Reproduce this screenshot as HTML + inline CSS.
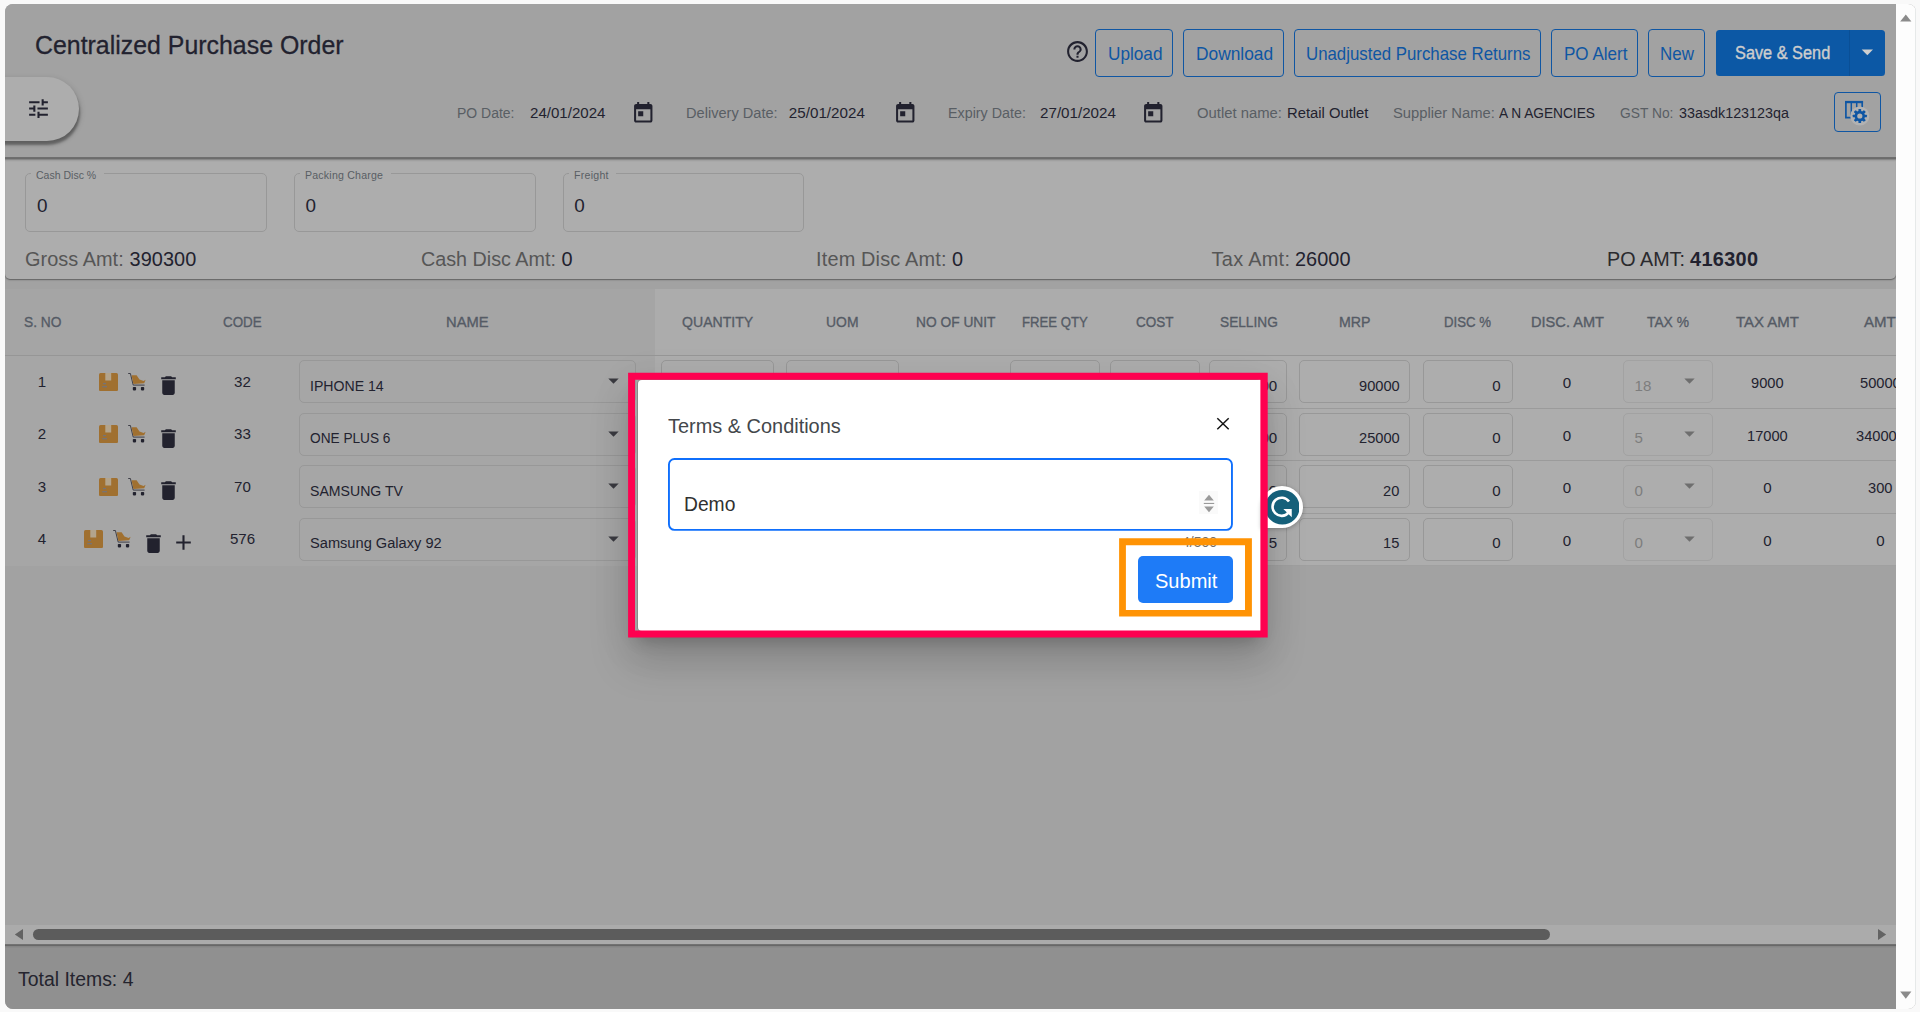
<!DOCTYPE html>
<html lang="en"><head><meta charset="utf-8"><title>Centralized Purchase Order</title>
<style>
html,body{margin:0;padding:0;}
body{width:1920px;height:1012px;overflow:hidden;background:#f9f9f9;font-family:"Liberation Sans",sans-serif;position:relative;}
.a{position:absolute;box-sizing:border-box;}
.t{position:absolute;white-space:nowrap;margin:0;padding:0;font-weight:400;}
.g{position:static;display:block;margin:0;padding:0;border:0;}
#clip{position:absolute;left:0;top:0;width:1920px;height:1012px;overflow:hidden;clip-path:inset(4px 4px 3px 5px round 8px);}
</style></head><body>
<div id="clip">
<div class="g backdrop">
<div class="a" style="left:0px;top:0px;width:1920.00px;height:1012.00px;background:#a2a2a2;"></div>
<div class="a" style="left:5px;top:4px;width:1891.00px;height:154.00px;background:#a2a2a2;"></div>
<div class="a" style="left:5px;top:158px;width:1891.00px;height:121.00px;background:#adadad;border-radius:0 0 5px 5px;box-shadow:0 1px 1.5px rgba(0,0,0,.42), inset 0 2px 2px -1px rgba(0,0,0,.32);"></div>
<div class="a" style="left:5px;top:157px;width:1891.00px;height:5.00px;background:linear-gradient(#6f6f6f 0,#6f6f6f 20%,#6c6c6c 20%,#6c6c6c 40%,#878787 40%,#878787 60%,#a0a0a0 60%,#a0a0a0 80%,#a9a9a9 80%);"></div>
</div>
<header class="g page-header">
<h1 class="t" style="left:35.40px;top:32px;font-size:26.6px;line-height:26.6px;transform:scaleX(0.9360);transform-origin:0 0;color:#22222f;-webkit-text-stroke:0.3px #22222f;">Centralized Purchase Order</h1>
<div class="g filter-toggle" role="button" aria-label="Filters">
<div class="a" style="left:-40px;top:77px;width:119.00px;height:64.00px;background:#adadad;border-radius:0 32px 32px 0;box-shadow:1px 4px 2.5px rgba(0,0,0,.34), 1px 2px 6px rgba(0,0,0,.16);"></div>
<svg class="a" style="left:26.2px;top:96px" width="25" height="25" viewBox="0 0 24 24"><path fill="#22222f" d="M3 17v2h6v-2H3zM3 5v2h10V5H3zm10 16v-2h8v-2h-8v-2h-2v6h2zM7 9v2H3v2h4v2h2V9H7zm14 4v-2H11v2h10zm-6-4h2V7h4V5h-4V3h-2v6z"/></svg>
</div>
<nav class="g toolbar">
<svg class="a" style="left:1065.0px;top:38.8px" width="25" height="25" viewBox="0 0 24 24"><path fill="#22222f" d="M11 18h2v-2h-2v2zm1-16C6.48 2 2 6.48 2 12s4.48 10 10 10 10-4.48 10-10S17.52 2 12 2zm0 18c-4.41 0-8-3.59-8-8s3.59-8 8-8 8 3.59 8 8-3.59 8-8 8zm0-14c-2.21 0-4 1.79-4 4h2c0-1.1.9-2 2-2s2 .9 2 2c0 2-3 1.75-3 5h2c0-2.25 3-2.5 3-5 0-2.21-1.79-4-4-4z"/></svg>
<div class="g btn-outline" role="button">
<div class="a" style="left:1095px;top:29px;width:77.50px;height:48.00px;border:1.3px solid #0f56a3;border-radius:4px;"></div>
<span class="t" style="left:1107.50px;top:45px;font-size:18.4px;line-height:18.4px;transform:scaleX(0.9347);transform-origin:0 0;color:#0f56a3;">Upload</span>
</div>
<div class="g btn-outline" role="button">
<div class="a" style="left:1183px;top:29px;width:101.00px;height:48.00px;border:1.3px solid #0f56a3;border-radius:4px;"></div>
<span class="t" style="left:1195.70px;top:45px;font-size:18.4px;line-height:18.4px;transform:scaleX(0.9434);transform-origin:0 0;color:#0f56a3;">Download</span>
</div>
<div class="g btn-outline" role="button">
<div class="a" style="left:1294px;top:29px;width:246.50px;height:48.00px;border:1.3px solid #0f56a3;border-radius:4px;"></div>
<span class="t" style="left:1306.00px;top:45px;font-size:18.4px;line-height:18.4px;transform:scaleX(0.9146);transform-origin:0 0;color:#0f56a3;">Unadjusted Purchase Returns</span>
</div>
<div class="g btn-outline" role="button">
<div class="a" style="left:1551px;top:29px;width:86.50px;height:48.00px;border:1.3px solid #0f56a3;border-radius:4px;"></div>
<span class="t" style="left:1563.50px;top:45px;font-size:18.4px;line-height:18.4px;transform:scaleX(0.9268);transform-origin:0 0;color:#0f56a3;">PO Alert</span>
</div>
<div class="g btn-outline" role="button">
<div class="a" style="left:1648px;top:29px;width:56.50px;height:48.00px;border:1.3px solid #0f56a3;border-radius:4px;"></div>
<span class="t" style="left:1660.00px;top:45px;font-size:18.4px;line-height:18.4px;transform:scaleX(0.9223);transform-origin:0 0;color:#0f56a3;">New</span>
</div>
<div class="g btn-primary split" role="button">
<div class="a" style="left:1716px;top:30px;width:169.00px;height:46.00px;background:#0c58a5;border-radius:3.5px;"></div>
<div class="a" style="left:1848.5px;top:30px;width:1.00px;height:46.00px;background:#0a4f96;"></div>
<div class="t" style="left:1734.80px;top:44px;font-size:18.3px;line-height:18.3px;transform:scaleX(0.8921);transform-origin:0 0;color:#cdcdcd;-webkit-text-stroke:0.4px #cdcdcd;">Save &amp; Send</div>
<svg class="a" style="left:1861px;top:48.6px" width="13" height="7" viewBox="0 0 13 7"><path d="M0.7 0.5 L12 0.5 L6.35 6.3 Z" fill="#cfcfcf"/></svg>
</div>
</nav>
<div class="g order-info">
<div class="t" style="left:457.00px;top:105px;font-size:15.2px;line-height:15.2px;transform:scaleX(0.9197);transform-origin:0 0;color:#595e64;">PO Date:</div>
<div class="t" style="left:529.50px;top:105px;font-size:15.2px;line-height:15.2px;transform:scaleX(0.9924);transform-origin:0 0;color:#22222f;">24/01/2024</div>
<svg class="a" style="left:630.7px;top:100.9px" width="24.5" height="24.5" viewBox="0 0 24 24"><path fill="#22222f" d="M19 3h-1V1h-2v2H8V1H6v2H5c-1.11 0-1.99.9-1.99 2L3 19c0 1.1.89 2 2 2h14c1.1 0 2-.9 2-2V5c0-1.1-.9-2-2-2zm0 16H5V8h14v11zM7 10h5v5H7z"/></svg>
<div class="t" style="left:685.75px;top:105px;font-size:15.2px;line-height:15.2px;transform:scaleX(0.9612);transform-origin:0 0;color:#595e64;">Delivery Date:</div>
<div class="t" style="left:788.75px;top:105px;font-size:15.2px;line-height:15.2px;letter-spacing:0.019px;color:#22222f;">25/01/2024</div>
<svg class="a" style="left:892.7px;top:100.9px" width="24.5" height="24.5" viewBox="0 0 24 24"><path fill="#22222f" d="M19 3h-1V1h-2v2H8V1H6v2H5c-1.11 0-1.99.9-1.99 2L3 19c0 1.1.89 2 2 2h14c1.1 0 2-.9 2-2V5c0-1.1-.9-2-2-2zm0 16H5V8h14v11zM7 10h5v5H7z"/></svg>
<div class="t" style="left:948.00px;top:105px;font-size:15.2px;line-height:15.2px;transform:scaleX(0.9422);transform-origin:0 0;color:#595e64;">Expiry Date:</div>
<div class="t" style="left:1040.00px;top:105px;font-size:15.2px;line-height:15.2px;transform:scaleX(0.9990);transform-origin:0 0;color:#22222f;">27/01/2024</div>
<svg class="a" style="left:1141.2px;top:100.9px" width="24.5" height="24.5" viewBox="0 0 24 24"><path fill="#22222f" d="M19 3h-1V1h-2v2H8V1H6v2H5c-1.11 0-1.99.9-1.99 2L3 19c0 1.1.89 2 2 2h14c1.1 0 2-.9 2-2V5c0-1.1-.9-2-2-2zm0 16H5V8h14v11zM7 10h5v5H7z"/></svg>
<div class="t" style="left:1196.50px;top:105px;font-size:15.2px;line-height:15.2px;transform:scaleX(0.9768);transform-origin:0 0;color:#595e64;">Outlet name:</div>
<div class="t" style="left:1286.50px;top:105px;font-size:15.2px;line-height:15.2px;transform:scaleX(0.9744);transform-origin:0 0;color:#22222f;">Retail Outlet</div>
<div class="t" style="left:1393.00px;top:105px;font-size:15.2px;line-height:15.2px;transform:scaleX(0.9737);transform-origin:0 0;color:#595e64;">Supplier Name:</div>
<div class="t" style="left:1499.00px;top:105px;font-size:15.2px;line-height:15.2px;transform:scaleX(0.9019);transform-origin:0 0;color:#22222f;">A N AGENCIES</div>
<div class="t" style="left:1620.00px;top:105px;font-size:15.2px;line-height:15.2px;transform:scaleX(0.9091);transform-origin:0 0;color:#595e64;">GST No:</div>
<div class="t" style="left:1678.50px;top:105px;font-size:15.2px;line-height:15.2px;transform:scaleX(0.9430);transform-origin:0 0;color:#22222f;">33asdk123123qa</div>
<div class="a" style="left:1834px;top:92px;width:47.00px;height:40.00px;border:1.3px solid #0f56a3;border-radius:4px;"></div>
<svg class="a" style="left:1843px;top:98px" width="28" height="28" viewBox="0 0 28 28">
<path d="M2.9 4 H19.2 V19.6 H2.9 Z" fill="none" stroke="#0f56a3" stroke-width="1.7"/>
<path d="M8.3 4 V19.6 M13.7 4 V19.6" stroke="#0f56a3" stroke-width="1.5"/>
<rect x="2.05" y="2.9" width="18" height="2.3" fill="#0f56a3"/>
<circle cx="16.8" cy="18" r="9.6" fill="#b2b2b2"/>
<g transform="translate(16.8 18)"><circle r="3.9" fill="none" stroke="#0f56a3" stroke-width="2.6"/><rect x="-1.35" y="-7.1" width="2.7" height="3" rx="0.5" transform="rotate(0)" fill="#0f56a3"/><rect x="-1.35" y="-7.1" width="2.7" height="3" rx="0.5" transform="rotate(45)" fill="#0f56a3"/><rect x="-1.35" y="-7.1" width="2.7" height="3" rx="0.5" transform="rotate(90)" fill="#0f56a3"/><rect x="-1.35" y="-7.1" width="2.7" height="3" rx="0.5" transform="rotate(135)" fill="#0f56a3"/><rect x="-1.35" y="-7.1" width="2.7" height="3" rx="0.5" transform="rotate(180)" fill="#0f56a3"/><rect x="-1.35" y="-7.1" width="2.7" height="3" rx="0.5" transform="rotate(225)" fill="#0f56a3"/><rect x="-1.35" y="-7.1" width="2.7" height="3" rx="0.5" transform="rotate(270)" fill="#0f56a3"/><rect x="-1.35" y="-7.1" width="2.7" height="3" rx="0.5" transform="rotate(315)" fill="#0f56a3"/></g>
</svg>
</div>
</header>
<section class="g charges-panel">
<div class="g charge-fields">
<div class="a" style="left:25px;top:173px;width:241.50px;height:58.50px;border:1px solid #989898;border-radius:5px;"></div>
<div class="a" style="left:31.099999999999998px;top:172px;width:73.40px;height:3.00px;background:#adadad;"></div>
<div class="t" style="left:36.30px;top:170px;font-size:10.6px;line-height:10.6px;transform:scaleX(0.9923);transform-origin:0 0;color:#595e64;">Cash Disc %</div>
<div class="t" style="left:37.00px;top:197px;font-size:18.9px;line-height:18.9px;color:#22222f;">0</div>
<div class="a" style="left:294px;top:173px;width:242.00px;height:58.50px;border:1px solid #989898;border-radius:5px;"></div>
<div class="a" style="left:299.8px;top:172px;width:91.20px;height:3.00px;background:#adadad;"></div>
<div class="t" style="left:305.00px;top:170px;font-size:10.6px;line-height:10.6px;letter-spacing:0.198px;color:#595e64;">Packing Charge</div>
<div class="t" style="left:305.60px;top:197px;font-size:18.9px;line-height:18.9px;color:#22222f;">0</div>
<div class="a" style="left:563px;top:173px;width:240.80px;height:58.50px;border:1px solid #989898;border-radius:5px;"></div>
<div class="a" style="left:568.8px;top:172px;width:47.70px;height:3.00px;background:#adadad;"></div>
<div class="t" style="left:574.00px;top:170px;font-size:10.6px;line-height:10.6px;letter-spacing:0.251px;color:#595e64;">Freight</div>
<div class="t" style="left:574.30px;top:197px;font-size:18.9px;line-height:18.9px;color:#22222f;">0</div>
</div>
<div class="g totals">
<div class="t" style="left:25.00px;top:250px;font-size:19.9px;line-height:19.9px;letter-spacing:0.037px;color:#565656;">Gross Amt:</div>
<div class="t" style="left:129.50px;top:250px;font-size:19.9px;line-height:19.9px;letter-spacing:0.069px;color:#22222f;">390300</div>
<div class="t" style="left:421.00px;top:250px;font-size:19.9px;line-height:19.9px;transform:scaleX(0.9925);transform-origin:0 0;color:#565656;">Cash Disc Amt:</div>
<div class="t" style="left:561.50px;top:250px;font-size:19.9px;line-height:19.9px;color:#22222f;">0</div>
<div class="t" style="left:816.00px;top:250px;font-size:19.9px;line-height:19.9px;letter-spacing:0.172px;color:#565656;">Item Disc Amt:</div>
<div class="t" style="left:952.00px;top:250px;font-size:19.9px;line-height:19.9px;color:#22222f;">0</div>
<div class="t" style="left:1211.50px;top:250px;font-size:19.9px;line-height:19.9px;letter-spacing:0.313px;color:#565656;">Tax Amt:</div>
<div class="t" style="left:1295.00px;top:250px;font-size:19.9px;line-height:19.9px;letter-spacing:0.040px;color:#22222f;">26000</div>
<div class="t" style="left:1607.00px;top:250px;font-size:19.9px;line-height:19.9px;transform:scaleX(0.9934);transform-origin:0 0;color:#2a2a2e;">PO AMT:</div>
<div class="t" style="left:1690.00px;top:250px;font-size:19.9px;line-height:19.9px;letter-spacing:0.319px;color:#22222f;font-weight:700;">416300</div>
</div>
</section>
<section class="g items-grid">
<div class="a" style="left:5px;top:289px;width:650.00px;height:276.50px;background:#a6a6a6;"></div>
<div class="a" style="left:655px;top:289px;width:1241.00px;height:276.50px;background:#adadad;"></div>
<div class="a" style="left:5px;top:289px;width:650.00px;height:66.50px;background:#a5a5a5;"></div>
<div class="a" style="left:655px;top:289px;width:1241.00px;height:66.50px;background:#acacac;"></div>
<div class="a" style="left:5px;top:355px;width:1891.00px;height:1.00px;background:#969696;"></div>
<div class="a" style="left:655px;top:407.79999999999995px;width:1241.00px;height:1.00px;background:#9b9b9b;"></div>
<div class="a" style="left:655px;top:460.29999999999995px;width:1241.00px;height:1.00px;background:#9b9b9b;"></div>
<div class="a" style="left:655px;top:512.8px;width:1241.00px;height:1.00px;background:#9b9b9b;"></div>
<div class="a" style="left:655px;top:565px;width:1241.00px;height:1.00px;background:#a0a0a0;"></div>
<div class="g grid-head" role="row">
<div class="t" style="left:23.75px;top:314px;font-size:15.5px;line-height:15.5px;transform:scaleX(0.8887);transform-origin:0 0;color:#555b65;-webkit-text-stroke:0.35px #555b65;">S. NO</div>
<div class="t" style="left:223.25px;top:314px;font-size:15.5px;line-height:15.5px;transform:scaleX(0.8654);transform-origin:0 0;color:#555b65;-webkit-text-stroke:0.35px #555b65;">CODE</div>
<div class="t" style="left:446.20px;top:314px;font-size:15.5px;line-height:15.5px;transform:scaleX(0.9513);transform-origin:0 0;color:#555b65;-webkit-text-stroke:0.35px #555b65;">NAME</div>
<div class="t" style="left:681.75px;top:314px;font-size:15.5px;line-height:15.5px;transform:scaleX(0.9093);transform-origin:0 0;color:#555b65;-webkit-text-stroke:0.35px #555b65;">QUANTITY</div>
<div class="t" style="left:826.25px;top:314px;font-size:15.5px;line-height:15.5px;transform:scaleX(0.8987);transform-origin:0 0;color:#555b65;-webkit-text-stroke:0.35px #555b65;">UOM</div>
<div class="t" style="left:915.50px;top:314px;font-size:15.5px;line-height:15.5px;transform:scaleX(0.8878);transform-origin:0 0;color:#555b65;-webkit-text-stroke:0.35px #555b65;">NO OF UNIT</div>
<div class="t" style="left:1022.00px;top:314px;font-size:15.5px;line-height:15.5px;transform:scaleX(0.8489);transform-origin:0 0;color:#555b65;-webkit-text-stroke:0.35px #555b65;">FREE QTY</div>
<div class="t" style="left:1136.30px;top:314px;font-size:15.5px;line-height:15.5px;transform:scaleX(0.8709);transform-origin:0 0;color:#555b65;-webkit-text-stroke:0.35px #555b65;">COST</div>
<div class="t" style="left:1219.70px;top:314px;font-size:15.5px;line-height:15.5px;transform:scaleX(0.8828);transform-origin:0 0;color:#555b65;-webkit-text-stroke:0.35px #555b65;">SELLING</div>
<div class="t" style="left:1339.40px;top:314px;font-size:15.5px;line-height:15.5px;transform:scaleX(0.9146);transform-origin:0 0;color:#555b65;-webkit-text-stroke:0.35px #555b65;">MRP</div>
<div class="t" style="left:1444.20px;top:314px;font-size:15.5px;line-height:15.5px;transform:scaleX(0.8527);transform-origin:0 0;color:#555b65;-webkit-text-stroke:0.35px #555b65;">DISC %</div>
<div class="t" style="left:1531.00px;top:314px;font-size:15.5px;line-height:15.5px;transform:scaleX(0.9418);transform-origin:0 0;color:#555b65;-webkit-text-stroke:0.35px #555b65;">DISC. AMT</div>
<div class="t" style="left:1646.70px;top:314px;font-size:15.5px;line-height:15.5px;transform:scaleX(0.8900);transform-origin:0 0;color:#555b65;-webkit-text-stroke:0.35px #555b65;">TAX %</div>
<div class="t" style="left:1736.00px;top:314px;font-size:15.5px;line-height:15.5px;transform:scaleX(0.9653);transform-origin:0 0;color:#555b65;-webkit-text-stroke:0.35px #555b65;">TAX AMT</div>
<div class="t" style="left:1864.20px;top:314px;font-size:15.5px;line-height:15.5px;transform:scaleX(0.9719);transform-origin:0 0;color:#555b65;-webkit-text-stroke:0.35px #555b65;">AMT</div>
</div>
<div class="g grid-row" role="row">
<div class="t" style="left:37.80px;top:374px;font-size:15.1px;line-height:15.1px;color:#22222f;">1</div>
<div class="t" style="left:234.10px;top:374px;font-size:15.1px;line-height:15.1px;transform:scaleX(1.0000);transform-origin:0 0;color:#22222f;">32</div>
<svg class="a" style="left:99.1px;top:372.7px" width="19" height="18.2" viewBox="0 0 19 18.2">
<rect x="0" y="0" width="19" height="18.2" rx="1.6" fill="#a07030"/>
<rect x="6.3" y="0" width="5.9" height="7.5" fill="#b3a48c"/>
<rect x="4" y="10.1" width="3" height="1.1" fill="#6f7482"/><rect x="3.2" y="13.2" width="4.8" height="1.1" fill="#6f7482"/>
</svg>
<svg class="a" style="left:128.1px;top:372.9px" width="18" height="18" viewBox="0 0 18 18">
<path d="M0.2 0.5 H2.4 L5.2 12.1 H16.6" fill="none" stroke="#33333d" stroke-width="0.9"/>
<path d="M3.6 2.3 H8.6 L11.5 6.6 L15.6 7.9 L17.6 6.7 L16.2 10.2 L5.4 11 Z" fill="#a07030"/>
<rect x="4.8" y="13.9" width="3.3" height="3.5" rx="0.8" fill="#22222e"/><rect x="12.9" y="13.9" width="3.3" height="3.5" rx="0.8" fill="#22222e"/>
</svg>
<svg class="a" style="left:156px;top:373.2px" width="25" height="25" viewBox="0 0 24 24"><path fill="#22222e" d="M6 19c0 1.1.9 2 2 2h8c1.1 0 2-.9 2-2V7H6v12zM19 4h-3.5l-1-1h-5l-1 1H5v2h14V4z"/></svg>
<div class="a" style="left:299.3px;top:360.29999999999995px;width:336.70px;height:43.10px;border:1px solid #989898;border-radius:5px;"></div>
<div class="t" style="left:310.00px;top:378px;font-size:15.1px;line-height:15.1px;transform:scaleX(0.9349);transform-origin:0 0;color:#22222f;">IPHONE 14</div>
<svg class="a" style="left:601.4px;top:368.29999999999995px" width="25" height="25" viewBox="0 0 24 24"><path fill="#3a3a40" d="M7 10l5 5 5-5z"/></svg>
<div class="a" style="left:661.25px;top:360.29999999999995px;width:112.50px;height:43.10px;border:1px solid #989898;border-radius:5px;"></div>
<div class="a" style="left:786.25px;top:360.29999999999995px;width:112.50px;height:43.10px;border:1px solid #989898;border-radius:5px;"></div>
<div class="a" style="left:1010.3px;top:360.29999999999995px;width:89.40px;height:43.10px;border:1px solid #989898;border-radius:5px;"></div>
<div class="a" style="left:1110px;top:360.29999999999995px;width:89.70px;height:43.10px;border:1px solid #989898;border-radius:5px;"></div>
<div class="a" style="left:1209.2px;top:360.29999999999995px;width:78.30px;height:43.10px;border:1px solid #989898;border-radius:5px;"></div>
<div class="a" style="left:1299.3px;top:360.29999999999995px;width:111.10px;height:43.10px;border:1px solid #989898;border-radius:5px;"></div>
<div class="a" style="left:1423.3px;top:360.29999999999995px;width:89.40px;height:43.10px;border:1px solid #989898;border-radius:5px;"></div>
<div class="t" style="left:1260.40px;top:378px;font-size:15.1px;line-height:15.1px;transform:scaleX(1.0000);transform-origin:0 0;color:#22222f;">00</div>
<div class="t" style="left:1358.77px;top:378px;font-size:15.1px;line-height:15.1px;transform:scaleX(0.9700);transform-origin:0 0;color:#22222f;">90000</div>
<div class="t" style="left:1492.30px;top:378px;font-size:15.1px;line-height:15.1px;color:#22222f;">0</div>
<div class="t" style="left:1562.80px;top:375px;font-size:15.1px;line-height:15.1px;color:#22222f;">0</div>
<div class="a" style="left:1623px;top:360.29999999999995px;width:89.70px;height:43.10px;border:1px solid #a2a2a2;border-radius:5px;"></div>
<div class="t" style="left:1634.50px;top:378px;font-size:15.1px;line-height:15.1px;transform:scaleX(1.0000);transform-origin:0 0;color:#7d7d7d;">18</div>
<svg class="a" style="left:1677px;top:368.29999999999995px" width="25" height="25" viewBox="0 0 24 24"><path fill="#6e6e6e" d="M7 10l5 5 5-5z"/></svg>
<div class="t" style="left:1750.91px;top:375px;font-size:15.1px;line-height:15.1px;transform:scaleX(0.9700);transform-origin:0 0;color:#22222f;">9000</div>
<div class="t" style="left:1859.93px;top:375px;font-size:15.1px;line-height:15.1px;transform:scaleX(0.9700);transform-origin:0 0;color:#22222f;">50000</div>
</div>
<div class="g grid-row" role="row">
<div class="t" style="left:37.80px;top:426px;font-size:15.1px;line-height:15.1px;color:#22222f;">2</div>
<div class="t" style="left:234.10px;top:426px;font-size:15.1px;line-height:15.1px;transform:scaleX(1.0000);transform-origin:0 0;color:#22222f;">33</div>
<svg class="a" style="left:99.1px;top:425.2px" width="19" height="18.2" viewBox="0 0 19 18.2">
<rect x="0" y="0" width="19" height="18.2" rx="1.6" fill="#a07030"/>
<rect x="6.3" y="0" width="5.9" height="7.5" fill="#b3a48c"/>
<rect x="4" y="10.1" width="3" height="1.1" fill="#6f7482"/><rect x="3.2" y="13.2" width="4.8" height="1.1" fill="#6f7482"/>
</svg>
<svg class="a" style="left:128.1px;top:425.4px" width="18" height="18" viewBox="0 0 18 18">
<path d="M0.2 0.5 H2.4 L5.2 12.1 H16.6" fill="none" stroke="#33333d" stroke-width="0.9"/>
<path d="M3.6 2.3 H8.6 L11.5 6.6 L15.6 7.9 L17.6 6.7 L16.2 10.2 L5.4 11 Z" fill="#a07030"/>
<rect x="4.8" y="13.9" width="3.3" height="3.5" rx="0.8" fill="#22222e"/><rect x="12.9" y="13.9" width="3.3" height="3.5" rx="0.8" fill="#22222e"/>
</svg>
<svg class="a" style="left:156px;top:425.7px" width="25" height="25" viewBox="0 0 24 24"><path fill="#22222e" d="M6 19c0 1.1.9 2 2 2h8c1.1 0 2-.9 2-2V7H6v12zM19 4h-3.5l-1-1h-5l-1 1H5v2h14V4z"/></svg>
<div class="a" style="left:299.3px;top:412.79999999999995px;width:336.70px;height:43.10px;border:1px solid #989898;border-radius:5px;"></div>
<div class="t" style="left:310.00px;top:430px;font-size:15.1px;line-height:15.1px;transform:scaleX(0.9050);transform-origin:0 0;color:#22222f;">ONE PLUS 6</div>
<svg class="a" style="left:601.4px;top:420.79999999999995px" width="25" height="25" viewBox="0 0 24 24"><path fill="#3a3a40" d="M7 10l5 5 5-5z"/></svg>
<div class="a" style="left:661.25px;top:412.79999999999995px;width:112.50px;height:43.10px;border:1px solid #989898;border-radius:5px;"></div>
<div class="a" style="left:786.25px;top:412.79999999999995px;width:112.50px;height:43.10px;border:1px solid #989898;border-radius:5px;"></div>
<div class="a" style="left:1010.3px;top:412.79999999999995px;width:89.40px;height:43.10px;border:1px solid #989898;border-radius:5px;"></div>
<div class="a" style="left:1110px;top:412.79999999999995px;width:89.70px;height:43.10px;border:1px solid #989898;border-radius:5px;"></div>
<div class="a" style="left:1209.2px;top:412.79999999999995px;width:78.30px;height:43.10px;border:1px solid #989898;border-radius:5px;"></div>
<div class="a" style="left:1299.3px;top:412.79999999999995px;width:111.10px;height:43.10px;border:1px solid #989898;border-radius:5px;"></div>
<div class="a" style="left:1423.3px;top:412.79999999999995px;width:89.40px;height:43.10px;border:1px solid #989898;border-radius:5px;"></div>
<div class="t" style="left:1260.40px;top:430px;font-size:15.1px;line-height:15.1px;transform:scaleX(1.0000);transform-origin:0 0;color:#22222f;">00</div>
<div class="t" style="left:1358.77px;top:430px;font-size:15.1px;line-height:15.1px;transform:scaleX(0.9700);transform-origin:0 0;color:#22222f;">25000</div>
<div class="t" style="left:1492.30px;top:430px;font-size:15.1px;line-height:15.1px;color:#22222f;">0</div>
<div class="t" style="left:1562.80px;top:428px;font-size:15.1px;line-height:15.1px;color:#22222f;">0</div>
<div class="a" style="left:1623px;top:412.79999999999995px;width:89.70px;height:43.10px;border:1px solid #a2a2a2;border-radius:5px;"></div>
<div class="t" style="left:1634.50px;top:430px;font-size:15.1px;line-height:15.1px;color:#7d7d7d;">5</div>
<svg class="a" style="left:1677px;top:420.79999999999995px" width="25" height="25" viewBox="0 0 24 24"><path fill="#6e6e6e" d="M7 10l5 5 5-5z"/></svg>
<div class="t" style="left:1746.83px;top:428px;font-size:15.1px;line-height:15.1px;transform:scaleX(0.9700);transform-origin:0 0;color:#22222f;">17000</div>
<div class="t" style="left:1855.86px;top:428px;font-size:15.1px;line-height:15.1px;transform:scaleX(0.9700);transform-origin:0 0;color:#22222f;">340000</div>
</div>
<div class="g grid-row" role="row">
<div class="t" style="left:37.80px;top:479px;font-size:15.1px;line-height:15.1px;color:#22222f;">3</div>
<div class="t" style="left:234.10px;top:479px;font-size:15.1px;line-height:15.1px;transform:scaleX(1.0000);transform-origin:0 0;color:#22222f;">70</div>
<svg class="a" style="left:99.1px;top:477.7px" width="19" height="18.2" viewBox="0 0 19 18.2">
<rect x="0" y="0" width="19" height="18.2" rx="1.6" fill="#a07030"/>
<rect x="6.3" y="0" width="5.9" height="7.5" fill="#b3a48c"/>
<rect x="4" y="10.1" width="3" height="1.1" fill="#6f7482"/><rect x="3.2" y="13.2" width="4.8" height="1.1" fill="#6f7482"/>
</svg>
<svg class="a" style="left:128.1px;top:477.9px" width="18" height="18" viewBox="0 0 18 18">
<path d="M0.2 0.5 H2.4 L5.2 12.1 H16.6" fill="none" stroke="#33333d" stroke-width="0.9"/>
<path d="M3.6 2.3 H8.6 L11.5 6.6 L15.6 7.9 L17.6 6.7 L16.2 10.2 L5.4 11 Z" fill="#a07030"/>
<rect x="4.8" y="13.9" width="3.3" height="3.5" rx="0.8" fill="#22222e"/><rect x="12.9" y="13.9" width="3.3" height="3.5" rx="0.8" fill="#22222e"/>
</svg>
<svg class="a" style="left:156px;top:478.2px" width="25" height="25" viewBox="0 0 24 24"><path fill="#22222e" d="M6 19c0 1.1.9 2 2 2h8c1.1 0 2-.9 2-2V7H6v12zM19 4h-3.5l-1-1h-5l-1 1H5v2h14V4z"/></svg>
<div class="a" style="left:299.3px;top:465.29999999999995px;width:336.70px;height:43.10px;border:1px solid #989898;border-radius:5px;"></div>
<div class="t" style="left:310.00px;top:483px;font-size:15.1px;line-height:15.1px;transform:scaleX(0.9340);transform-origin:0 0;color:#22222f;">SAMSUNG TV</div>
<svg class="a" style="left:601.4px;top:473.29999999999995px" width="25" height="25" viewBox="0 0 24 24"><path fill="#3a3a40" d="M7 10l5 5 5-5z"/></svg>
<div class="a" style="left:661.25px;top:465.29999999999995px;width:112.50px;height:43.10px;border:1px solid #989898;border-radius:5px;"></div>
<div class="a" style="left:786.25px;top:465.29999999999995px;width:112.50px;height:43.10px;border:1px solid #989898;border-radius:5px;"></div>
<div class="a" style="left:1010.3px;top:465.29999999999995px;width:89.40px;height:43.10px;border:1px solid #989898;border-radius:5px;"></div>
<div class="a" style="left:1110px;top:465.29999999999995px;width:89.70px;height:43.10px;border:1px solid #989898;border-radius:5px;"></div>
<div class="a" style="left:1209.2px;top:465.29999999999995px;width:78.30px;height:43.10px;border:1px solid #989898;border-radius:5px;"></div>
<div class="a" style="left:1299.3px;top:465.29999999999995px;width:111.10px;height:43.10px;border:1px solid #989898;border-radius:5px;"></div>
<div class="a" style="left:1423.3px;top:465.29999999999995px;width:89.40px;height:43.10px;border:1px solid #989898;border-radius:5px;"></div>
<div class="t" style="left:1268.80px;top:483px;font-size:15.1px;line-height:15.1px;color:#22222f;">0</div>
<div class="t" style="left:1383.21px;top:483px;font-size:15.1px;line-height:15.1px;transform:scaleX(0.9700);transform-origin:0 0;color:#22222f;">20</div>
<div class="t" style="left:1492.30px;top:483px;font-size:15.1px;line-height:15.1px;color:#22222f;">0</div>
<div class="t" style="left:1562.80px;top:480px;font-size:15.1px;line-height:15.1px;color:#22222f;">0</div>
<div class="a" style="left:1623px;top:465.29999999999995px;width:89.70px;height:43.10px;border:1px solid #a2a2a2;border-radius:5px;"></div>
<div class="t" style="left:1634.50px;top:483px;font-size:15.1px;line-height:15.1px;color:#7d7d7d;">0</div>
<svg class="a" style="left:1677px;top:473.29999999999995px" width="25" height="25" viewBox="0 0 24 24"><path fill="#6e6e6e" d="M7 10l5 5 5-5z"/></svg>
<div class="t" style="left:1763.13px;top:480px;font-size:15.1px;line-height:15.1px;color:#22222f;">0</div>
<div class="t" style="left:1868.08px;top:480px;font-size:15.1px;line-height:15.1px;transform:scaleX(0.9700);transform-origin:0 0;color:#22222f;">300</div>
</div>
<div class="g grid-row" role="row">
<div class="t" style="left:37.80px;top:531px;font-size:15.1px;line-height:15.1px;color:#22222f;">4</div>
<div class="t" style="left:229.90px;top:531px;font-size:15.1px;line-height:15.1px;transform:scaleX(1.0000);transform-origin:0 0;color:#22222f;">576</div>
<svg class="a" style="left:83.6px;top:530.2px" width="19" height="18.2" viewBox="0 0 19 18.2">
<rect x="0" y="0" width="19" height="18.2" rx="1.6" fill="#a07030"/>
<rect x="6.3" y="0" width="5.9" height="7.5" fill="#b3a48c"/>
<rect x="4" y="10.1" width="3" height="1.1" fill="#6f7482"/><rect x="3.2" y="13.2" width="4.8" height="1.1" fill="#6f7482"/>
</svg>
<svg class="a" style="left:112.6px;top:530.4px" width="18" height="18" viewBox="0 0 18 18">
<path d="M0.2 0.5 H2.4 L5.2 12.1 H16.6" fill="none" stroke="#33333d" stroke-width="0.9"/>
<path d="M3.6 2.3 H8.6 L11.5 6.6 L15.6 7.9 L17.6 6.7 L16.2 10.2 L5.4 11 Z" fill="#a07030"/>
<rect x="4.8" y="13.9" width="3.3" height="3.5" rx="0.8" fill="#22222e"/><rect x="12.9" y="13.9" width="3.3" height="3.5" rx="0.8" fill="#22222e"/>
</svg>
<svg class="a" style="left:140.5px;top:530.6999999999999px" width="25" height="25" viewBox="0 0 24 24"><path fill="#22222e" d="M6 19c0 1.1.9 2 2 2h8c1.1 0 2-.9 2-2V7H6v12zM19 4h-3.5l-1-1h-5l-1 1H5v2h14V4z"/></svg>
<svg class="a" style="left:171.2px;top:530.3px" width="25" height="25" viewBox="0 0 24 24"><path fill="#22222e" d="M19 13h-6v6h-2v-6H5v-2h6V5h2v6h6v2z"/></svg>
<div class="a" style="left:299.3px;top:517.8px;width:336.70px;height:43.10px;border:1px solid #989898;border-radius:5px;"></div>
<div class="t" style="left:310.00px;top:535px;font-size:15.1px;line-height:15.1px;transform:scaleX(0.9686);transform-origin:0 0;color:#22222f;">Samsung Galaxy 92</div>
<svg class="a" style="left:601.4px;top:525.8px" width="25" height="25" viewBox="0 0 24 24"><path fill="#3a3a40" d="M7 10l5 5 5-5z"/></svg>
<div class="a" style="left:661.25px;top:517.8px;width:112.50px;height:43.10px;border:1px solid #989898;border-radius:5px;"></div>
<div class="a" style="left:786.25px;top:517.8px;width:112.50px;height:43.10px;border:1px solid #989898;border-radius:5px;"></div>
<div class="a" style="left:1010.3px;top:517.8px;width:89.40px;height:43.10px;border:1px solid #989898;border-radius:5px;"></div>
<div class="a" style="left:1110px;top:517.8px;width:89.70px;height:43.10px;border:1px solid #989898;border-radius:5px;"></div>
<div class="a" style="left:1209.2px;top:517.8px;width:78.30px;height:43.10px;border:1px solid #989898;border-radius:5px;"></div>
<div class="a" style="left:1299.3px;top:517.8px;width:111.10px;height:43.10px;border:1px solid #989898;border-radius:5px;"></div>
<div class="a" style="left:1423.3px;top:517.8px;width:89.40px;height:43.10px;border:1px solid #989898;border-radius:5px;"></div>
<div class="t" style="left:1268.80px;top:535px;font-size:15.1px;line-height:15.1px;color:#22222f;">5</div>
<div class="t" style="left:1383.21px;top:535px;font-size:15.1px;line-height:15.1px;transform:scaleX(0.9700);transform-origin:0 0;color:#22222f;">15</div>
<div class="t" style="left:1492.30px;top:535px;font-size:15.1px;line-height:15.1px;color:#22222f;">0</div>
<div class="t" style="left:1562.80px;top:533px;font-size:15.1px;line-height:15.1px;color:#22222f;">0</div>
<div class="a" style="left:1623px;top:517.8px;width:89.70px;height:43.10px;border:1px solid #a2a2a2;border-radius:5px;"></div>
<div class="t" style="left:1634.50px;top:535px;font-size:15.1px;line-height:15.1px;color:#7d7d7d;">0</div>
<svg class="a" style="left:1677px;top:525.8px" width="25" height="25" viewBox="0 0 24 24"><path fill="#6e6e6e" d="M7 10l5 5 5-5z"/></svg>
<div class="t" style="left:1763.13px;top:533px;font-size:15.1px;line-height:15.1px;color:#22222f;">0</div>
<div class="t" style="left:1876.23px;top:533px;font-size:15.1px;line-height:15.1px;color:#22222f;">0</div>
</div>
</section>
<div class="g h-scrollbar">
<div class="a" style="left:5px;top:925px;width:1891.00px;height:19.00px;background:#ababab;"></div>
<div class="a" style="left:33px;top:929px;width:1517.00px;height:11.00px;background:#5c5c5c;border-radius:5.5px;"></div>
<svg class="a" style="left:14px;top:928px" width="10" height="13" viewBox="0 0 10 13"><path d="M0.8 6.5 L9 1 L9 12 Z" fill="#636363"/></svg>
<svg class="a" style="left:1877px;top:928px" width="10" height="13" viewBox="0 0 10 13"><path d="M9.2 6.5 L1 1 L1 12 Z" fill="#636363"/></svg>
</div>
<footer class="g page-footer">
<div class="a" style="left:5px;top:944px;width:1891.00px;height:65.00px;background:#909090;"></div>
<div class="a" style="left:5px;top:944px;width:1891.00px;height:4.00px;background:linear-gradient(#727272 0,#727272 25%,#686868 25%,#686868 50%,#858585 50%,#858585 75%,#8b8b8b 75%);"></div>
<div class="t" style="left:17.50px;top:970px;font-size:19.6px;line-height:19.6px;transform:scaleX(0.9909);transform-origin:0 0;color:#24242e;">Total Items: 4</div>
</footer>
<div class="g v-scrollbar">
<div class="a" style="left:1896px;top:0px;width:24.00px;height:1012.00px;background:#fdfdfd;"></div>
<div class="a" style="left:1915px;top:0px;width:1.00px;height:1012.00px;background:#e6e9e9;"></div>
<svg class="a" style="left:1899px;top:13px" width="14" height="10" viewBox="0 0 14 10"><path d="M1.2 8.6 L6.8 1.4 L12.4 8.6 Z" fill="#8b8b8b"/></svg>
<svg class="a" style="left:1899px;top:990px" width="14" height="10" viewBox="0 0 14 10"><path d="M1.2 1.4 L12.4 1.4 L6.8 8.8 Z" fill="#8b8b8b"/></svg>
</div>
<div class="g terms-dialog" role="dialog" aria-label="Terms &amp; Conditions">
<div class="a" style="left:630px;top:374px;width:636.00px;height:262.00px;box-shadow:0 11px 15px -7px rgba(0,0,0,.2), 0 26px 38px 2px rgba(0,0,0,.15), 0 9px 40px 3px rgba(0,0,0,.06);"></div>
<div class="a" style="left:636.8px;top:379px;width:624.70px;height:252.50px;background:#8a8a8a;border-radius:5px;"></div>
<div class="a" style="left:638px;top:380px;width:623.00px;height:251.00px;background:#fff;border-radius:4px 0 0 4px;"></div>
<div class="a" style="left:1260.8px;top:485.8px;width:42.30px;height:42.30px;background:#fff;border-radius:21.2px 21.2px 21.2px 0;box-shadow:0 1px 4px rgba(0,0,0,.25);"></div>
<svg class="a" style="left:1264.5px;top:490.2px" width="34.6" height="34.6" viewBox="0 0 34.6 34.6">
<circle cx="17.3" cy="17.3" r="17.3" fill="#15607a"/>
<path d="M24.01 11.61 A9.05 9.05 0 1 0 23.53 22.62" fill="none" stroke="#fff" stroke-width="2.6"/>
<path d="M18.4 18.9 H26.75 V27.2 Z" fill="#fff"/>
</svg>
<svg class="a" style="left:627px;top:371px" width="642" height="268" viewBox="0 0 642 268"><path fill="#fe0150" fill-rule="evenodd" d="M1.10 1.70H640.70V266.40H1.10Z M8.00 8.80V259.40H633.40V8.80Z"/></svg>
<h5 class="t" style="left:668.40px;top:416px;font-size:20.2px;line-height:20.2px;transform:scaleX(0.9870);transform-origin:0 0;color:#43474b;">Terms &amp; Conditions</h5>
<svg class="a" style="left:1216px;top:416.5px" width="14" height="14" viewBox="0 0 14 14"><path d="M1.3 1.3 L12.7 12.3 M12.7 1.3 L1.3 12.3" stroke="#151515" stroke-width="1.5" fill="none"/></svg>
<svg class="a" style="left:666px;top:456px" width="570" height="78" viewBox="0 0 570 78"><rect x="2.95" y="2.95" width="563" height="70.9" rx="5.5" fill="#fff" stroke="#0f6ffc" stroke-width="1.9"/></svg>
<div class="t" style="left:683.60px;top:494px;font-size:20.4px;line-height:20.4px;transform:scaleX(0.9446);transform-origin:0 0;color:#303030;">Demo</div>
<div class="a" style="left:1199px;top:491px;width:19.00px;height:23.00px;background:#fafafa;"></div>
<svg class="a" style="left:1203px;top:493.5px" width="12" height="19" viewBox="0 0 12 19"><path d="M1.2 6.4 L6 0.8 L10.8 6.4 Z M1.2 12.6 L10.8 12.6 L6 18.2 Z" fill="#9a9a9a"/><rect x="0.8" y="8.9" width="10.4" height="1.1" fill="#9a9a9a"/></svg>
<div class="t" style="left:1181.80px;top:535px;font-size:14.9px;line-height:14.9px;transform:scaleX(0.9413);transform-origin:0 0;color:#707070;">4/500</div>
<svg class="a" style="left:1118px;top:537px" width="135" height="81" viewBox="0 0 135 81"><path fill="#ff9304" fill-rule="evenodd" d="M1.10 1.30H133.90V79.40H1.10Z M7.90 8.20V72.90H127.00V8.20Z"/></svg>
<div class="g btn-submit" role="button">
<div class="a" style="left:1138px;top:556px;width:95.00px;height:47.00px;background:#1e7bf7;border-radius:5px;"></div>
<span class="t" style="left:1154.90px;top:571px;font-size:20.2px;line-height:20.2px;transform:scaleX(0.9925);transform-origin:0 0;color:#fff;">Submit</span>
</div>
</div>
</div>
</body></html>
